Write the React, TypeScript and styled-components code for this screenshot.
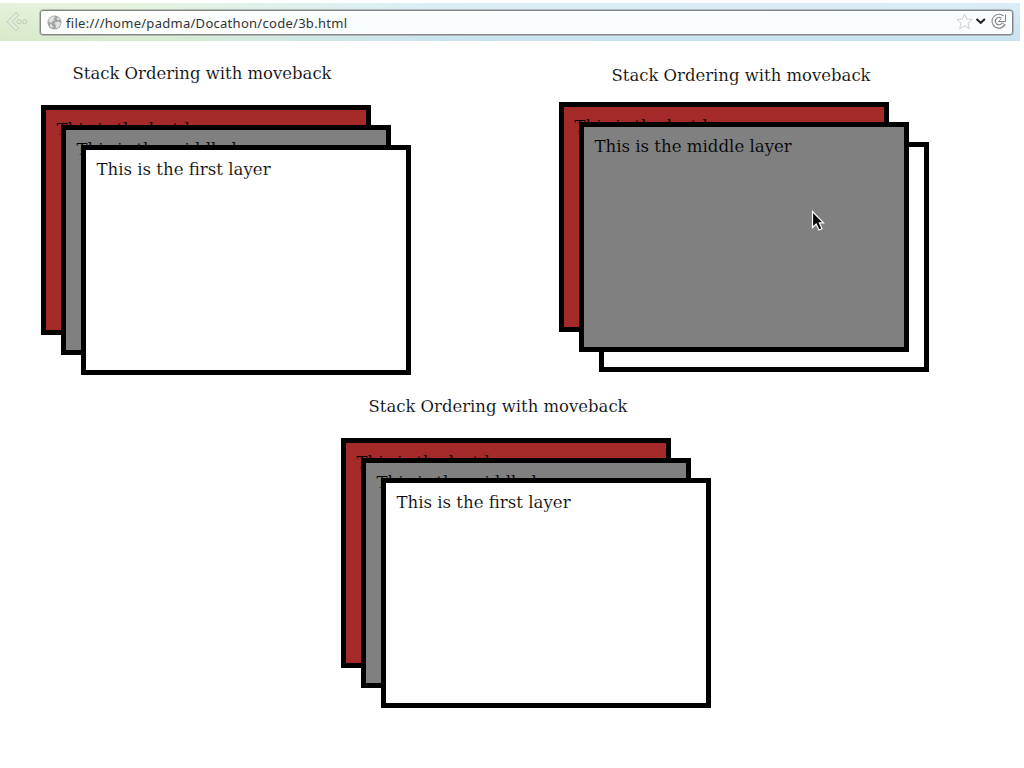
import React from 'react';
import styled, { createGlobalStyle } from 'styled-components';

const Global = createGlobalStyle`
  * { box-sizing: border-box; }
  body { margin: 0; background: #fff; color: #000; font: 16.47px/20px "DejaVu Serif", serif; }
`;

const Page = styled.div`
  width: 1024px;
  height: 768px;
  overflow: hidden;
  padding-top: 3px;
`;

const Toolbar = styled.header`
  display: flex;
  align-items: center;
  width: 1020px;
  height: 38px;
  padding: 0 7px 0 6px;
  gap: 12px;
  background: linear-gradient(to bottom, rgba(255, 255, 255, 0.35), rgba(255, 255, 255, 0)),
    linear-gradient(to right, #d8eac8 0, #d9ecd0 130px, #cfe8e4 300px, #c9e5ee 440px, #c8e3f1 100%);
`;

const AddressBar = styled.div`
  display: flex;
  align-items: center;
  flex: 1;
  height: 25px;
  padding: 0 4px 0 6px;
  border: 1px solid #858585;
  border-radius: 3px;
  background: rgba(255, 255, 255, 0.88);
  box-shadow: 0 0 0 0.5px #8a8a8a;
`;

const Url = styled.span`
  flex: 1;
  margin-left: 4px;
  padding-top: 2px;
  font: 13px/20px "Noto Sans", sans-serif;
  letter-spacing: 0.28px;
  color: #2f3436;
`;

const Content = styled.main`
  display: grid;
  grid-template-columns: 518px 1fr;
`;

const Figure = styled.section<{ $left: number; $top: number; $gap: number; $wide?: boolean }>`
  grid-column: ${(p) => (p.$wide ? '1 / -1' : 'auto')};
  display: flex;
  flex-direction: column;
  gap: ${(p) => p.$gap}px;
  padding: ${(p) => p.$top}px 0 0 ${(p) => p.$left}px;
`;

const Caption = styled.div<{ $indent: number }>`
  height: 20px;
  padding-left: ${(p) => p.$indent}px;
  white-space: nowrap;
  -webkit-text-stroke: 0.14px #fff;
`;

const Stack = styled.div`
  display: grid;
  width: 370px;
  height: 270px;
`;

const Layer = styled.div<{ $color: string; $step: number; $order: number }>`
  grid-area: 1 / 1;
  width: 330px;
  height: 230px;
  margin: ${(p) => p.$step * 20}px 0 0 ${(p) => p.$step * 20}px;
  padding: 10px 10px 0 10.4px;
  border: 5px solid #000;
  background: ${(p) => p.$color};
  z-index: ${(p) => p.$order};
  font-size: 16.6px;
  -webkit-text-stroke: 0.14px ${(p) => p.$color};
`;

const Pointer = styled.svg`
  position: absolute;
  left: 811px;
  top: 210px;
  z-index: 10;
`;

function BackIcon() {
  return (
    <svg width="22" height="22" viewBox="0 0 22 22" fill="none" stroke="#bccab6" strokeWidth="1">
      <path d="M10 1.500 1 10.700l9 9 2.500-2.500-6.500-6.500 6.500-6.500Z" fill="#e3eddb" />
      <circle cx="13" cy="10.700" r="2.100" />
      <circle cx="18.700" cy="10.700" r="2.100" />
    </svg>
  );
}

function GlobeIcon() {
  return (
    <svg width="15" height="15" viewBox="0 0 15 15">
      <circle cx="7.500" cy="7.500" r="7" fill="#a3a6a6" />
      <path d="M1.500 5 4 2l3-.8 1 1.300L6.500 4l.8 1.500L5 6.500 4.500 8 2 7ZM8 7.500l3-.8 2.800 1-1 3-2.500 2.800-1.500-1 .2-2.200L7.500 9ZM9.500 3l2-.5 1.500 2-2 .7ZM3 9l2 .8 1 2.200-.8 1L3 11.500Z" fill="#e0e2e2" />
    </svg>
  );
}

function BarIcons() {
  return (
    <svg width="52" height="20" viewBox="0 0 52 20" fill="none">
      <path d="m8.500 2 2.200 5.100 5.600.4-4.300 3.600 1.400 5.600-4.900-3-4.900 3L5 11.100.8 7.500l5.500-.4Z" stroke="#ccd0d2" />
      <path d="m20.500 7 4.200 3.800L28.900 7" stroke="#222" strokeWidth="2" />
      <path d="M46.500 5.200A5.300 5.300 0 1 0 47.800 11.500" stroke="#858585" strokeWidth="4.400" />
      <path d="M49.500 2.500v7h-7l2.700-2.700" fill="#fafdfe" stroke="#858585" />
      <path d="M46.500 5.200A5.300 5.300 0 1 0 47.300 12" stroke="#fafdfe" strokeWidth="2.200" />
      <path d="M49 3.700V9h-5.300Z" fill="#fafdfe" />
    </svg>
  );
}

interface LayersProps {
  raised?: boolean;
}

function Layers({ raised }: LayersProps) {
  return (
    <Stack>
      <Layer $color="#a52a2a" $step={0} $order={1}>This is the last layer</Layer>
      <Layer $color="#808080" $step={1} $order={raised ? 3 : 2}>This is the middle layer</Layer>
      <Layer $color="#fff" $step={2} $order={raised ? 2 : 3}>This is the first layer</Layer>
    </Stack>
  );
}

export default function App() {
  return (
    <Page>
      <Global />
      <Toolbar>
        <BackIcon />
        <AddressBar>
          <GlobeIcon />
          <Url>file:///home/padma/Docathon/code/3b.html</Url>
          <BarIcons />
        </AddressBar>
      </Toolbar>
      <Content>
        <Figure $left={41} $top={23} $gap={21}>
          <Caption $indent={31.5}>Stack Ordering with moveback</Caption>
          <Layers />
        </Figure>
        <Figure $left={41} $top={25} $gap={16}>
          <Caption $indent={52.5}>Stack Ordering with moveback</Caption>
          <Layers raised />
        </Figure>
        <Figure $left={341} $top={22} $gap={21} $wide>
          <Caption $indent={27.5}>Stack Ordering with moveback</Caption>
          <Layers />
        </Figure>
      </Content>
      <Pointer width="16" height="24" viewBox="0 0 16 24">
        <path d="M1.500 1.500v16l3.700-3.500 2.800 6 3-1.300-2.700-5.900h4.200Z" fill="#080808" stroke="#fff" strokeWidth="1.200" />
      </Pointer>
    </Page>
  );
}
